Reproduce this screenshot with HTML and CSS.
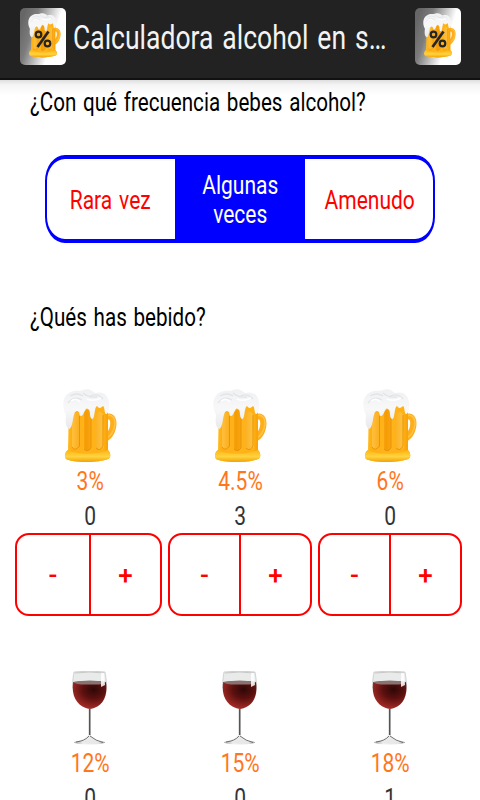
FILE: index.html
```html
<!DOCTYPE html>
<html lang="es">
<head>
<meta charset="utf-8">
<title>Calculadora alcohol en sangre</title>
<link rel="stylesheet" href="styles.css">
</head>
<body>
<svg class="defs" aria-hidden="true">
  <defs>
    <linearGradient id="tile" x1="0" y1=".3" x2="1" y2=".7"><stop offset="0" stop-color="#666"/><stop offset=".25" stop-color="#7c7c7c"/><stop offset=".7" stop-color="#fff"/><stop offset="1" stop-color="#fff"/></linearGradient>
    <linearGradient id="beer" x1="0" x2="1"><stop offset="0" stop-color="#ffc52c"/><stop offset=".15" stop-color="#ffae13"/><stop offset=".5" stop-color="#ffb51b"/><stop offset=".85" stop-color="#ffb014"/><stop offset="1" stop-color="#f49a00"/></linearGradient>
    <linearGradient id="rib" x1="0" x2="1"><stop offset="0" stop-color="#ffc03c"/><stop offset=".45" stop-color="#f59c05"/><stop offset="1" stop-color="#ffc544"/></linearGradient>
    <linearGradient id="base" x1="0" y1="0" x2="0" y2="1"><stop offset="0" stop-color="#ffb515"/><stop offset=".55" stop-color="#ffd340"/><stop offset="1" stop-color="#f5a100"/></linearGradient>
    <linearGradient id="foam" x1="0" y1="0" x2="0" y2="1"><stop offset="0" stop-color="#f0f1f3"/><stop offset=".5" stop-color="#f8f8f9"/><stop offset="1" stop-color="#e8e9eb"/></linearGradient>
    <radialGradient id="wine" cx=".62" cy=".3" r=".65"><stop offset="0" stop-color="#2d0807"/><stop offset=".5" stop-color="#5b100e"/><stop offset="1" stop-color="#9d2824"/></radialGradient>
    <linearGradient id="glass" x1="0" x2="1"><stop offset="0" stop-color="#aaa"/><stop offset=".3" stop-color="#eee"/><stop offset=".8" stop-color="#e5e5e5"/><stop offset="1" stop-color="#999"/></linearGradient>
    <symbol id="mug" viewBox="0 0 54 74">
      <path d="M39 29C44 21 54 24 53.500 35C53 46 46 54 39 53V47C46 44 48 37 47 32C46 29 42 31 40 35Z" fill="#ffae1b"/>
      <path d="M42 28C47 24 52 27 52 35C51 43 47 48 43 49" fill="none" stroke="#ffc44b" stroke-width="1.500"/>
      <path d="M6 15L45 15L45 61C48 64 48 69 45 70C36 74 10 74 3 70C1 67 2 63 5 61Z" fill="url(#beer)"/>
      <path d="M5 61C14 66 34 66 45 61C48 65 48 69 45 70C36 74 10 74 3 70C1 67 2 63 5 61Z" fill="url(#base)"/>
      <path d="M9 26Q14 22 17 26L16.500 59Q12 63 9 58ZM21 23Q25 18 28 23L28 60Q24 64 21 60ZM33 26Q37 19 40 26L41 58Q37 63 33 59Z" fill="url(#rib)"/>
      <path d="M16.500 27V57Q12 63 9 58M28 23V59Q24 64 21 60M40 26V57Q37 63 33 59" fill="none" stroke="#e99309" stroke-width="1"/>
      <path d="M6 40C1 37 3 29 3 26C-1 19-1 8 6 4C12 0 16 3 20 1C26-1 29 2 32 4C39 2 45 5 46 13C47 20 45 25 43 25C41 24 42 18 40 17C38 19 36 20 34 17C31 18 32 31 29 30C26 29 28 21 25 20C22 17 21 27 18 27C16 27 17 22 14 22C9 22 11 39 6 40Z" fill="url(#foam)"/>
      <path d="M5 14Q11 6 19 11M7 7Q14 3 20 7M26 8Q34 3 40 10M20 4Q26 9 34 8" fill="none" stroke="#e2e4e6" stroke-width="1.300"/>
      <path d="M8 12Q13 8 17 13M24 10Q30 13 38 9" fill="none" stroke="#fff" stroke-width="1.500"/>
    </symbol>
    <symbol id="goblet" viewBox="0 0 36 74">
      <path d="M2 1Q18-1 33 1C36 16 36 34 18 38C0 34-1 16 2 1Z" fill="#e9ebeb" stroke="#bbb" stroke-width=".6"/>
      <path d="M1.200 11Q18 9 34 11C36 25 31 36 18 38C5 36-1 25 1.200 11Z" fill="url(#wine)"/>
      <path d="M1.200 11Q18 8 34 11Q33 14 18 13.500Q3 14 1.200 11Z" fill="#8a7271"/>
      <path d="M3 2Q18 0 32 2" fill="none" stroke="#c8c8c8"/>
      <path d="M29 2L32 2L33 14L29 16Z" fill="#fff" opacity=".85"/>
      <path d="M16.500 38H18.700L18.500 64Q22 69 33 71Q34 73 18 73.500Q1 73 2 71Q13 69 16.500 64Z" fill="url(#glass)"/>
      <path d="M17.700 38V64" stroke="#555" stroke-width="1.600"/>
      <path d="M18 65Q24 70 31 71.500M4 71Q13 70 17 65" fill="none" stroke="#555" stroke-width=".8"/>
      <path d="M10 71Q18 67 27 71Q18 74 10 71Z" fill="#e8e8e8"/>
    </symbol>
    <symbol id="app" viewBox="0 0 46 57">
      <rect width="46" height="57" rx="5" fill="url(#tile)"/>
      <use href="#mug" x="7.500" y="5" width="34" height="45"/>
      <g fill="none" stroke="#252525" stroke-width="2.200"><circle cx="18.500" cy="26.500" r="2.800"/><circle cx="27.500" cy="35.500" r="2.800"/><path d="M28.500 23.500L17.500 39" stroke-width="2.700"/></g>
    </symbol>
  </defs>
</svg>
<header class="bar">
  <svg class="app-icon"><use href="#app"/></svg>
  <h1 class="title"><span class="squeeze">Calculadora alcohol en s…</span></h1>
  <svg class="app-icon"><use href="#app"/></svg>
</header>
<main>
  <h2 class="question first"><span class="squeeze">¿Con qué frecuencia bebes alcohol?</span></h2>
  <div class="segments">
    <button class="segment"><span class="squeeze">Rara vez</span></button>
    <button class="segment selected"><span class="squeeze">Algunas<br>veces</span></button>
    <button class="segment last"><span class="squeeze">Amenudo</span></button>
  </div>
  <h2 class="question second"><span class="squeeze">¿Qués has bebido?</span></h2>
  <section class="drinks">
    <article class="drink"><svg class="mug"><use href="#mug"/></svg><p class="percent"><span class="squeeze">3%</span></p><p class="count"><span class="squeeze">0</span></p><div class="stepper"><button>-</button><button>+</button></div></article>
    <article class="drink"><svg class="mug"><use href="#mug"/></svg><p class="percent"><span class="squeeze">4.5%</span></p><p class="count"><span class="squeeze">3</span></p><div class="stepper"><button>-</button><button>+</button></div></article>
    <article class="drink"><svg class="mug"><use href="#mug"/></svg><p class="percent"><span class="squeeze">6%</span></p><p class="count"><span class="squeeze">0</span></p><div class="stepper"><button>-</button><button>+</button></div></article>
  </section>
  <section class="drinks wines">
    <article class="drink"><svg class="goblet"><use href="#goblet"/></svg><p class="percent"><span class="squeeze">12%</span></p><p class="count"><span class="squeeze">0</span></p></article>
    <article class="drink"><svg class="goblet"><use href="#goblet"/></svg><p class="percent"><span class="squeeze">15%</span></p><p class="count"><span class="squeeze">0</span></p></article>
    <article class="drink"><svg class="goblet"><use href="#goblet"/></svg><p class="percent"><span class="squeeze">18%</span></p><p class="count"><span class="squeeze">1</span></p></article>
  </section>
</main>
</body>
</html>
```
FILE: styles.css
```css
* { box-sizing: border-box; }
html, body { height: 100%; }
body { margin: 0; overflow: hidden; background: #fff; color: #000; font-family: Roboto, sans-serif; font-size: 25px; display: flex; flex-direction: column; }
h1, h2, p { margin: 0; font-weight: 400; white-space: nowrap; }
button { font: inherit; color: red; background: none; border: 0; padding: 0; }
.defs { position: absolute; width: 0; height: 0; }
.squeeze { display: inline-block; transform: scaleX(.84); word-spacing: 2px; }
.bar { flex: none; height: 80px; padding: 8px 19px 0 20px; display: flex; background: #222; border-bottom: 2px solid #111; }
.app-icon { flex: none; width: 46px; height: 57px; }
.title { flex: 1; min-width: 0; margin-left: 7px; font-size: 33px; line-height: 59px; color: #f3f3f3; }
.title .squeeze, .question .squeeze { transform-origin: left; }
.title .squeeze { transform: scaleX(.803); word-spacing: 3px; }
.question .squeeze { transform: scaleX(.824); }
main { flex: 1; background: linear-gradient(#dedede 0, #f5f5f5 5px, #fff 16px); }
.question { padding-left: 30px; line-height: 30px; font-size: 25px; }
.first { padding-top: 8px; }
.segments { display: flex; width: 390px; height: 88px; margin: 37px 0 0 45px; border: solid blue; border-width: 4px 2px; border-radius: 20px / 26px; overflow: hidden; }
.segment { flex: 1; line-height: 29px; padding: 2px 2px 0 0; }
.segment.selected { flex: none; width: 130px; padding-right: 0; background: blue; color: #fff; }
.segment.last { padding: 2px 0 0 2px; }
.second { padding-top: 60px; }
.drinks { display: grid; grid-template-columns: repeat(3, 150px); padding-left: 15px; margin-top: 56px; }
.drink { display: flex; flex-direction: column; align-items: center; }
.mug { width: 54px; height: 74px; }
.goblet { width: 36px; height: 74px; }
.percent { line-height: 35px; color: #ff761d; margin-top: 1px; padding-left: 1px; }
.count { line-height: 35px; color: #333; }
.stepper { display: flex; align-self: stretch; height: 83px; margin: -1px 3px 0; border: 2px solid red; border-radius: 14px; }
.drink:first-child .stepper { margin-left: 0; }
.stepper button { flex: 1; font-weight: 500; font-size: 26px; }
.stepper button + button { flex: none; width: 71px; border-left: 2px solid red; }
.wines { margin-top: 55px; }
```
